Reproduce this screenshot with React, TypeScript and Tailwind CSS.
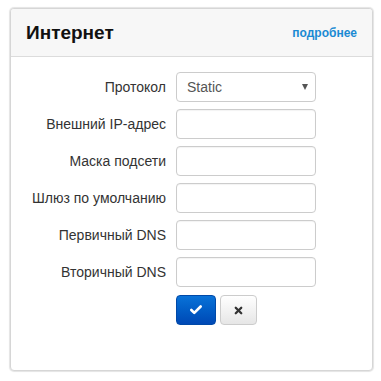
import { Check, X } from 'lucide-react';

const fields = [
  'Внешний IP-адрес',
  'Маска подсети',
  'Шлюз по умолчанию',
  'Первичный DNS',
  'Вторичный DNS',
];

function Row({ label, children }: { label: string; children: React.ReactNode }) {
  return (
    <div className="flex items-center h-[30px]">
      <label className="w-[165px] pr-[10px] text-right text-[14px] text-[#333]">{label}</label>
      {children}
    </div>
  );
}

export default function App() {
  return (
    <div className="w-[381px] h-[381px] bg-white pt-[8px] pl-[10px] font-['Liberation_Sans',Arial,sans-serif]">
      <div className="w-[363px] h-[363px] rounded-[4px] border border-[#d6d6d6] shadow-[0_0_1px_1px_#e4e4e4] bg-white overflow-hidden">
        <div className="flex items-center justify-between h-[48px] bg-[#f7f7f7] border-b border-[#dcdcdc] pl-[15px] pr-[15px]">
          <h2 className="text-[19px] font-bold text-[#111] pt-[2px]">Интернет</h2>
          <a className="text-[12px] font-bold text-[#1a8ad3] pt-[1px]">подробнее</a>
        </div>

        <div className="flex flex-col gap-[7px] pt-[15px]">
          <Row label="Протокол">
            <div className="relative w-[140px] h-[30px] rounded-[4px] border border-[#ccc] flex items-center pl-[10px] text-[14px] text-[#555]">
              Static
              <span className="absolute right-[7px] top-[11px] w-0 h-0 border-l-[3.5px] border-r-[3.5px] border-t-[6px] border-l-transparent border-r-transparent border-t-[#555]" />
            </div>
          </Row>
          {fields.map((f) => (
            <Row key={f} label={f}>
              <div className="w-[140px] h-[30px] rounded-[4px] border border-[#ccc] bg-white shadow-[inset_0_1px_1px_rgba(0,0,0,0.05)]" />
            </Row>
          ))}
          <div className="flex gap-[4px] pl-[165px] pt-[1px]">
            <button className="w-[40px] h-[30px] rounded-[4px] border border-[#0049a8] bg-gradient-to-b from-[#0a72d8] to-[#0048b5] flex items-center justify-center">
              <Check className="w-[14px] h-[14px] text-white" strokeWidth={4.5} />
            </button>
            <button className="w-[37px] h-[30px] rounded-[4px] border border-[#ccc] bg-gradient-to-b from-white to-[#e6e6e6] flex items-center justify-center">
              <X className="w-[11px] h-[11px] text-[#333]" strokeWidth={5} />
            </button>
          </div>
        </div>
      </div>
    </div>
  );
}
